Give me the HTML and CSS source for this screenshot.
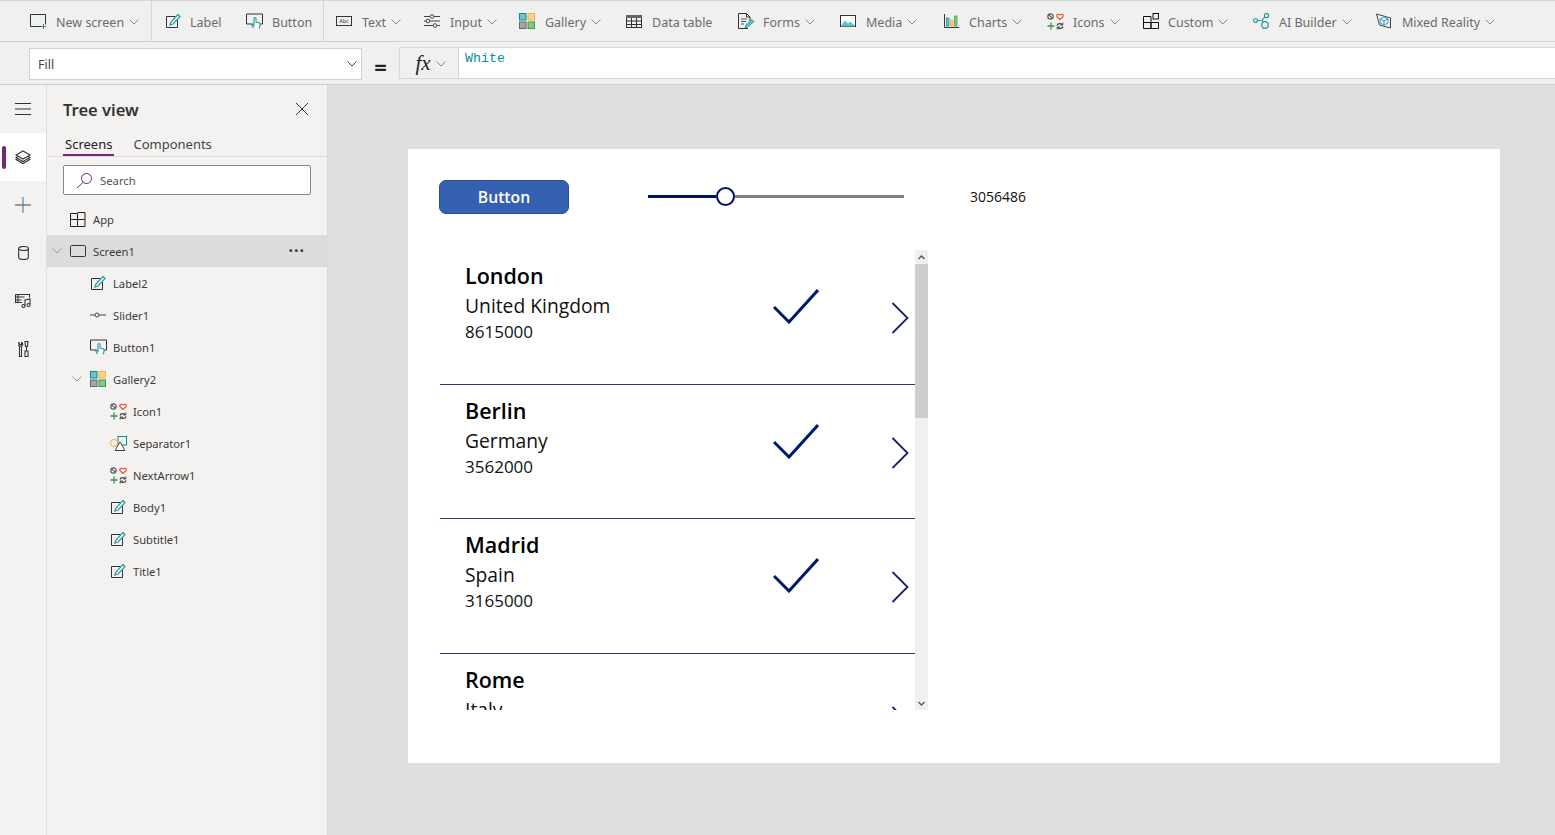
FILE: index.html
```html
<!DOCTYPE html>
<html lang="en">
<head>
  <meta charset="UTF-8">
  <title>Power Apps Studio</title>
  <link rel="stylesheet" href="styles.css">
</head>
<body>
  <svg class="defs" width="0" height="0">
    <symbol id="i-label" viewBox="0 0 16 16">
      <path d="M1.500 3.500h9M1.500 3.500v11h11v-8" fill="none" stroke="#333"/>
      <path d="M5 12l1-3 7-7.500 2 2L8 11z" fill="#fff" stroke="#2a9d9f" stroke-width="1.300"/>
    </symbol>
    <symbol id="i-button" viewBox="0 0 17 16">
      <path d="M6 11H.5V1h16v10h-4" fill="none" stroke="#333"/>
      <path d="M7.500 15l-2-3.500 1-.5 1.500 1.500V5.500a1 1 0 0 1 2 0V9l3 .8c.8.3 1 .8 1 1.500V13l-1 2.500" fill="#fff" stroke="#1f9a9c" stroke-width="1.100"/>
    </symbol>
    <symbol id="i-gallery" viewBox="0 0 16 16">
      <rect x=".5" y=".5" width="6.500" height="6.500" fill="#66c9c9" stroke="#11898c"/>
      <rect x="9" y=".5" width="6.500" height="6.500" fill="#fdd38a" stroke="#f1b04c"/>
      <rect x=".5" y="9" width="6.500" height="6.500" fill="#a6a6a6" stroke="#666"/>
      <rect x="9" y="9" width="6.500" height="6.500" fill="#86c488" stroke="#3f9a45"/>
    </symbol>
    <symbol id="i-icons" viewBox="0 0 17 17">
      <circle cx="3.500" cy="3.500" r="2.700" fill="none" stroke="#555" stroke-width="1.200"/>
      <path d="M1.700 1.700l3.600 3.600" stroke="#555" stroke-width="1.200"/>
      <path d="M13 6.500L10 3.500c-1-1.500 1-3 3-1.500 2-1.500 4 0 3 1.500z" fill="#fff" stroke="#e8593c" stroke-width="1.200"/>
      <path d="M.5 13h7M4 9.500v7" stroke="#36963f" stroke-width="1.300"/>
      <path d="M10 12.500a3 3 0 0 1 5-1M16 13.500a3 3 0 0 1-5 1" fill="none" stroke="#444" stroke-width="1.300"/>
      <path d="M15.800 9.500v2.500h-2.500M10.200 16.500V14h2.500" fill="none" stroke="#444"/>
    </symbol>
    <symbol id="i-app" viewBox="0 0 16 15">
      <path d="M.5 1.500h7v13h-7zM7.500 7.500H.5M7.500 .5h7.500v7H7.500M15 7.500v7H7.500" fill="none" stroke="#222"/>
    </symbol>
    <symbol id="i-check" viewBox="0 0 46 35">
      <path d="M1 18l15 15L45 1" fill="none" stroke="#001a6b" stroke-width="3"/>
    </symbol>
    <symbol id="i-next" viewBox="0 0 18 32">
      <path d="M1.500 1l15 15-15 15" fill="none" stroke="#13226f" stroke-width="1.800"/>
    </symbol>
    <symbol id="i-chev" viewBox="0 0 10 6">
      <path d="M.5.500L5 5 9.500.5" fill="none" stroke="currentColor"/>
    </symbol>
  </svg>

  <header class="toolbar">
    <div class="tool-group group-new">
      <div class="tool">
        <svg class="tool-icon m9" width="17" height="15" viewBox="0 0 17 15"><path d="M12 12.500H.5V.5h15v10" fill="none" stroke="#333"/><path d="M11 12.500h5M13.500 10v5" stroke="#36963f"/></svg>
        <span>New screen</span><svg class="chev"><use href="#i-chev"/></svg>
      </div>
    </div>
    <div class="tool-group group-basic">
      <div class="tool">
        <svg class="tool-icon m9" width="16" height="16"><use href="#i-label"/></svg>
        <span>Label</span>
      </div>
      <div class="tool">
        <svg class="tool-icon m9" width="17" height="16"><use href="#i-button"/></svg>
        <span>Button</span>
      </div>
    </div>
    <div class="tool-group group-rest">
      <div class="tool">
        <svg class="tool-icon" width="16" height="10" viewBox="0 0 16 10"><rect x=".5" y=".5" width="15" height="9" fill="none" stroke="#333"/><text x="8" y="7" class="abc">Abc</text></svg>
        <span>Text</span><svg class="chev"><use href="#i-chev"/></svg>
      </div>
      <div class="tool">
        <svg class="tool-icon" width="16" height="14" viewBox="0 0 16 14"><path d="M0 2.500h6M10 2.500h6M0 7h2M6 7h10M0 11.500h9M13 11.500h3" stroke="#444"/><circle cx="8" cy="2.500" r="1.800" fill="none" stroke="#444"/><circle cx="4" cy="7" r="1.800" fill="none" stroke="#444"/><circle cx="11" cy="11.500" r="1.800" fill="none" stroke="#444"/></svg>
        <span>Input</span><svg class="chev"><use href="#i-chev"/></svg>
      </div>
      <div class="tool">
        <svg class="tool-icon" width="16" height="16"><use href="#i-gallery"/></svg>
        <span>Gallery</span><svg class="chev"><use href="#i-chev"/></svg>
      </div>
      <div class="tool">
        <svg class="tool-icon" width="16" height="13" viewBox="0 0 16 13"><rect x=".5" y=".5" width="15" height="12" fill="none" stroke="#333"/><rect x="0" y="0" width="16" height="3" fill="#666"/><path d="M0 6h16M0 9.500h16M5.500 3v10M10.500 3v10" stroke="#333"/></svg>
        <span>Data table</span>
      </div>
      <div class="tool">
        <svg class="tool-icon m9" width="16" height="16" viewBox="0 0 16 16"><path d="M10 15.500H.5V.5h8l3.500 3.500v4M8.500.5V4H12" fill="none" stroke="#333"/><path d="M3 6h6M3 8.500h5M3 11h3" stroke="#555"/><path d="M7 15l1-3 6-5.500 2 2L9.500 14z" fill="#62c3c3" stroke="#2a9d9f"/></svg>
        <span>Forms</span><svg class="chev"><use href="#i-chev"/></svg>
      </div>
      <div class="tool">
        <svg class="tool-icon" width="16" height="12" viewBox="0 0 16 12"><rect x=".5" y=".5" width="15" height="11" fill="#fff" stroke="#333"/><path d="M1 10.500l4-5 3 3 2-2 5 4v1H1z" fill="#62c3c3"/><circle cx="12.500" cy="3" r=".8" fill="#f1b04c"/></svg>
        <span>Media</span><svg class="chev"><use href="#i-chev"/></svg>
      </div>
      <div class="tool">
        <svg class="tool-icon" width="15" height="14" viewBox="0 0 15 14"><path d="M.5 0v13.500H15" fill="none" stroke="#333"/><rect x="2.500" y="4" width="2.500" height="8" fill="#62c3c3" stroke="#11898c" stroke-width=".7"/><rect x="6.500" y="6" width="2.500" height="6" fill="#fdc56f" stroke="#f1b04c" stroke-width=".7"/><rect x="10.500" y="2" width="2.500" height="10" fill="#86c488" stroke="#3f9a45" stroke-width=".7"/></svg>
        <span>Charts</span><svg class="chev"><use href="#i-chev"/></svg>
      </div>
      <div class="tool">
        <svg class="tool-icon m9" width="17" height="17"><use href="#i-icons"/></svg>
        <span>Icons</span><svg class="chev"><use href="#i-chev"/></svg>
      </div>
      <div class="tool">
        <svg class="tool-icon m9" width="16" height="16" viewBox="0 0 16 16"><path d="M.5 3.500h7.500v12H.5zM8 9.500h7.500v6H8zM.5 9.500H8" fill="none" stroke="#111"/><rect x="10" y=".5" width="5.500" height="5.500" fill="none" stroke="#111"/></svg>
        <span>Custom</span><svg class="chev"><use href="#i-chev"/></svg>
      </div>
      <div class="tool">
        <svg class="tool-icon m9" width="17" height="16" viewBox="0 0 17 16"><g fill="none" stroke="#1f9a9c" stroke-width="1.200"><circle cx="2.500" cy="7.500" r="2"/><circle cx="13.500" cy="2.500" r="2.100"/><circle cx="12" cy="12" r="3.300"/><path d="M4.500 7.500h4M12 4.500c-2 .5-3.500 2.500-2 5"/></g></svg>
        <span>AI Builder</span><svg class="chev"><use href="#i-chev"/></svg>
      </div>
      <div class="tool">
        <svg class="tool-icon m11" width="15" height="16" viewBox="0 0 15 16"><path d="M.5 1l14 4v10L3.500 12z" fill="none" stroke="#444"/><path d="M4 6l4-2 4 2v4l-4 2-4-2zM4 6l4 2 4-2M8 8v4" fill="none" stroke="#2e9fd0"/></svg>
        <span>Mixed Reality</span><svg class="chev"><use href="#i-chev"/></svg>
      </div>
    </div>
  </header>

  <div class="formula-bar">
    <div class="prop-select">
      <span>Fill</span><svg class="chev dark"><use href="#i-chev"/></svg>
    </div>
    <div class="equals">=</div>
    <div class="fx-btn">
      <i>fx</i><svg class="chev"><use href="#i-chev"/></svg>
    </div>
    <div class="formula-input">White</div>
  </div>

  <main class="workspace">
    <nav class="rail">
      <div class="rail-item">
        <svg width="16" height="12" viewBox="0 0 16 12"><path d="M0 .5h16M0 6h16M0 11.500h16" stroke="#333"/></svg>
      </div>
      <div class="rail-item active">
        <svg width="16" height="15" viewBox="0 0 16 15"><g fill="#fff" stroke="#333" stroke-width="1.100"><path d="M1 9.500l7 4 7-4-7-4z"/><path d="M1 7.500l7 4 7-4-7-4z"/><path d="M1 5l7 4 7-4-7-4z"/></g></svg>
      </div>
      <div class="rail-item">
        <svg width="16" height="16" viewBox="0 0 16 16"><path d="M0 8h16" stroke="#444"/><path d="M8 0v16" stroke="#3b6ea5"/></svg>
      </div>
      <div class="rail-item">
        <svg width="11" height="14" viewBox="0 0 11 14"><g fill="none" stroke="#333" stroke-width="1.100"><ellipse cx="5.500" cy="2.500" rx="4.800" ry="2"/><path d="M.7 2.500v9c0 1.200 2 2 4.800 2s4.800-.8 4.800-2v-9"/></g></svg>
      </div>
      <div class="rail-item">
        <svg width="16" height="14" viewBox="0 0 16 14"><g fill="none" stroke="#333" stroke-width="1.100"><path d="M.5.500h14v3M.5.500v8h6.500M.5 3h9M.5 6h6M3 .5v8"/><path d="M10 11.500V6l5-1v5.500"/><circle cx="8.500" cy="12" r="1.500"/><circle cx="13.500" cy="11" r="1.500"/></g></svg>
      </div>
      <div class="rail-item">
        <svg width="11" height="16" viewBox="0 0 11 16"><g fill="none" stroke="#333" stroke-width="1.100"><path d="M1 1.500a1.800 1.800 0 0 0 1 3.500 1.800 1.800 0 0 0 1.500-3.500v2h-2zM1.500 5v10.500h2V5"/><path d="M7 .5h3l-.5 5h-2zM8.500 5.500V10M7 10h3v5.500H7z"/></g></svg>
      </div>
    </nav>

    <aside class="tree-panel">
      <div class="tree-title">
        <h2>Tree view</h2>
        <svg width="14" height="14" viewBox="0 0 14 14"><path d="M1 1l12 12M13 1L1 13" stroke="#333"/></svg>
      </div>
      <div class="tabs">
        <span class="tab selected">Screens</span>
        <span class="tab">Components</span>
      </div>
      <div class="search">
        <svg width="17" height="17" viewBox="0 0 17 17"><circle cx="10.500" cy="6.500" r="5" fill="none" stroke="#742774"/><path d="M7 10.500L1 16" stroke="#742774"/></svg>
        <span>Search</span>
      </div>
      <ul class="tree">
        <li class="row">
          <svg class="row-icon" width="16" height="15"><use href="#i-app"/></svg>App
        </li>
        <li class="row current">
          <svg class="twist"><use href="#i-chev"/></svg>
          <svg class="row-icon" width="16" height="12" viewBox="0 0 16 12"><rect x=".5" y=".5" width="15" height="11" rx="1" fill="none" stroke="#333"/></svg>Screen1
          <span class="more">···</span>
        </li>
        <li class="row lvl1">
          <svg class="row-icon" width="16" height="16"><use href="#i-label"/></svg>Label2
        </li>
        <li class="row lvl1">
          <svg class="row-icon" width="16" height="6" viewBox="0 0 16 6"><path d="M0 3h5M9 3h7" stroke="#444"/><circle cx="7" cy="3" r="2" fill="none" stroke="#444"/></svg>Slider1
        </li>
        <li class="row lvl1">
          <svg class="row-icon wide" width="17" height="16"><use href="#i-button"/></svg>Button1
        </li>
        <li class="row lvl1">
          <svg class="twist"><use href="#i-chev"/></svg>
          <svg class="row-icon" width="16" height="16"><use href="#i-gallery"/></svg>Gallery2
        </li>
        <li class="row lvl2">
          <svg class="row-icon wide" width="17" height="17"><use href="#i-icons"/></svg>Icon1
        </li>
        <li class="row lvl2">
          <svg class="row-icon wide" width="17" height="15" viewBox="0 0 17 15"><rect x="8" y=".5" width="8.500" height="8.500" fill="none" stroke="#11898c"/><circle cx="4" cy="7" r="3.600" fill="none" stroke="#f1b04c"/><path d="M10 6l-5 8.500h10z" fill="#fff" stroke="#444"/></svg>Separator1
        </li>
        <li class="row lvl2">
          <svg class="row-icon wide" width="17" height="17"><use href="#i-icons"/></svg>NextArrow1
        </li>
        <li class="row lvl2">
          <svg class="row-icon" width="16" height="16"><use href="#i-label"/></svg>Body1
        </li>
        <li class="row lvl2">
          <svg class="row-icon" width="16" height="16"><use href="#i-label"/></svg>Subtitle1
        </li>
        <li class="row lvl2">
          <svg class="row-icon" width="16" height="16"><use href="#i-label"/></svg>Title1
        </li>
      </ul>
    </aside>

    <section class="canvas">
      <div class="screen">
        <div class="top-row">
          <button class="app-btn">Button</button>
          <div class="slider">
            <div class="slider-fill"></div>
            <div class="slider-thumb"></div>
            <div class="slider-rest"></div>
          </div>
          <div class="slider-value">3056486</div>
        </div>
        <div class="gallery">
          <div class="gallery-list">
            <div class="card">
              <div class="card-text">
                <div class="city">London</div>
                <div class="country">United Kingdom</div>
                <div class="pop">8615000</div>
              </div>
              <svg class="check"><use href="#i-check"/></svg>
              <svg class="next"><use href="#i-next"/></svg>
            </div>
            <div class="card">
              <div class="card-text">
                <div class="city">Berlin</div>
                <div class="country">Germany</div>
                <div class="pop">3562000</div>
              </div>
              <svg class="check"><use href="#i-check"/></svg>
              <svg class="next"><use href="#i-next"/></svg>
            </div>
            <div class="card">
              <div class="card-text">
                <div class="city">Madrid</div>
                <div class="country">Spain</div>
                <div class="pop">3165000</div>
              </div>
              <svg class="check"><use href="#i-check"/></svg>
              <svg class="next"><use href="#i-next"/></svg>
            </div>
            <div class="card">
              <div class="card-text">
                <div class="city">Rome</div>
                <div class="country">Italy</div>
              </div>
              <svg class="next"><use href="#i-next"/></svg>
            </div>
          </div>
          <div class="scrollbar">
            <div class="scroll-arrow">
              <svg width="7" height="5" viewBox="0 0 7 5"><path d="M.5 4L3.500 1l3 3" fill="none" stroke="#555" stroke-width="1.300"/></svg>
            </div>
            <div class="scroll-thumb"></div>
            <div class="scroll-track"></div>
            <div class="scroll-arrow">
              <svg width="7" height="5" viewBox="0 0 7 5"><path d="M.5 1l3 3 3-3" fill="none" stroke="#555" stroke-width="1.300"/></svg>
            </div>
          </div>
        </div>
      </div>
    </section>
  </main>
</body>
</html>
```

FILE: styles.css
```css
* {
  box-sizing: border-box;
}
html, body {
  margin: 0;
  height: 100%;
  overflow: hidden;
}
body {
  display: flex;
  flex-direction: column;
  font-family: "Noto Sans", "Open Sans", sans-serif;
  font-size: 12.500px;
  color: #333;
  background: #f0f0f0;
}
.defs {
  position: absolute;
}

/* top ribbon */
.toolbar {
  display: flex;
  height: 42px;
  flex: none;
  background: #f0f0f0;
  border-top: 1px solid #d6d6d6;
  border-bottom: 1px solid #d0d0d0;
}
.tool-group {
  display: grid;
  align-items: center;
  height: 40px;
  border-right: 1px solid #d6d6d6;
}
.group-new {
  width: 152px;
  padding-left: 30px;
  grid-template-columns: 1fr;
}
.group-basic {
  width: 172px;
  padding-left: 13px;
  grid-template-columns: 81px 1fr;
}
.group-rest {
  padding-left: 12px;
  border-right: 0;
  grid-template-columns: 88px 95px 107px 112px 102px 104px 103px 96px 110px 123px 130px;
}
.tool {
  display: flex;
  align-items: center;
  color: #6b6b6b;
  white-space: nowrap;
}
.tool span {
  padding-top: 2px;
}
.tool-icon {
  flex: none;
  margin-right: 10px;
}
.tool-icon.m9 {
  margin-right: 9px;
}
.tool-icon.m11 {
  margin-right: 11px;
}
.abc {
  font-size: 5.500px;
  text-anchor: middle;
  fill: #333;
}
.chev {
  flex: none;
  width: 10px;
  height: 6px;
  margin-left: 5px;
  margin-top: 2px;
  color: #8a8a8a;
}
.chev.dark {
  margin-top: 0;
  color: #444;
}

/* formula row */
.formula-bar {
  display: flex;
  align-items: flex-start;
  height: 43px;
  flex: none;
  padding: 5px 0 0 29px;
  background: #f0f0f0;
  border-bottom: 1px solid #d0d0d0;
}
.prop-select {
  display: flex;
  align-items: center;
  justify-content: space-between;
  width: 333px;
  height: 32px;
  margin-top: 1px;
  padding: 0 4px 0 8px;
  background: #fff;
  border: 1px solid #cfcfcf;
  color: #444;
}
.equals {
  width: 37px;
  padding-top: 5px;
  text-align: center;
  font-size: 22px;
  font-weight: 700;
  line-height: 28px;
  color: #222;
}
.fx-btn {
  display: flex;
  align-items: center;
  justify-content: center;
  width: 60px;
  height: 32px;
  padding-left: 3px;
  background: #f0f0f0;
  border: 1px solid #d6d6d6;
}
.fx-btn i {
  font-family: "Liberation Serif", serif;
  font-size: 21px;
  color: #222;
}
.formula-input {
  flex: 1;
  height: 32px;
  padding: 3px 6px;
  background: #fff;
  border-top: 1px solid #d6d6d6;
  border-bottom: 1px solid #d6d6d6;
  font-family: "Liberation Mono", monospace;
  font-size: 13.330px;
  color: #0c8ba3;
}

/* body */
.workspace {
  display: flex;
  flex: 1;
  min-height: 0;
}
.rail {
  width: 47px;
  flex: none;
  background: #f3f2f1;
  border-right: 1px solid #e1dfdd;
}
.rail-item {
  display: flex;
  align-items: center;
  justify-content: center;
  height: 48px;
}
.rail-item.active {
  position: relative;
  background: #fff;
}
.rail-item.active::before {
  content: "";
  position: absolute;
  left: 2px;
  top: 13px;
  width: 4px;
  height: 23px;
  border-radius: 2px;
  background: #742774;
}

.tree-panel {
  width: 280px;
  flex: none;
  background: #f3f2f1;
}
.tree-title {
  display: flex;
  align-items: center;
  justify-content: space-between;
  height: 50px;
  padding: 0 18px 2px 16px;
}
.tree-title h2 {
  margin: 0;
  font-size: 16.500px;
  font-weight: 600;
  color: #323130;
}
.tabs {
  display: flex;
  height: 22px;
  padding-left: 16px;
  gap: 17px;
  border-bottom: 1px solid #dcdcdc;
}
.tab {
  height: 21px;
  padding: 0 2px;
  line-height: 18px;
  font-size: 13px;
  color: #444;
}
.tab.selected {
  border-bottom: 2px solid #742774;
  color: #222;
}
.search {
  display: flex;
  align-items: center;
  height: 30px;
  margin: 8px 16px 8px;
  padding-left: 12px;
  gap: 7px;
  background: #fff;
  border: 1px solid #8a8886;
  border-radius: 2px;
  font-size: 11.300px;
  color: #555;
}
.tree {
  margin: 0;
  padding: 0;
  list-style: none;
}
.row {
  position: relative;
  display: flex;
  align-items: center;
  height: 32px;
  padding-left: 23px;
  font-size: 11.200px;
  color: #3b3a39;
}
.row.lvl1 {
  padding-left: 43px;
}
.row.lvl2 {
  padding-left: 63px;
}
.row.current {
  background: #dcdcdc;
}
.row-icon {
  flex: none;
  margin-right: 7px;
}
.row-icon.wide {
  margin-right: 6px;
}
.twist {
  position: absolute;
  left: 5px;
  width: 10px;
  height: 6px;
  color: #999;
}
.row.lvl1 .twist {
  left: 25px;
}
.more {
  position: absolute;
  right: 22px;
  margin-bottom: 3px;
  font-size: 16px;
  font-weight: 700;
  letter-spacing: 1px;
  line-height: 16px;
}

/* the app on the canvas */
.canvas {
  flex: 1;
  padding: 64px 55px 0 80px;
  background: #dfdfdf;
  border-left: 1px solid #dadada;
}
.screen {
  width: 1092px;
  height: 614px;
  padding: 31px 0 0 31px;
  background: #fff;
}
.top-row {
  display: flex;
  align-items: center;
  height: 33px;
}
.app-btn {
  width: 130px;
  height: 34px;
  background: #3660b1;
  border: 1px solid #2a4f97;
  border-radius: 7px;
  color: #fff;
  font-family: "Open Sans", sans-serif;
  font-size: 15.700px;
  font-weight: 600;
}
.slider {
  display: flex;
  align-items: center;
  width: 256px;
  margin-left: 79px;
}
.slider-fill {
  width: 68px;
  height: 3px;
  background: #00126b;
}
.slider-thumb {
  width: 19px;
  height: 19px;
  flex: none;
  background: #fff;
  border: 2.500px solid #00126b;
  border-radius: 50%;
}
.slider-rest {
  flex: 1;
  height: 3px;
  background: #808080;
}
.slider-value {
  margin-left: 66px;
  font-family: "Open Sans", sans-serif;
  font-size: 14px;
  color: #111;
}
.gallery {
  display: flex;
  width: 488px;
  height: 460px;
  margin: 37px 0 0 1px;
  overflow: hidden;
}
.gallery-list {
  width: 475px;
  flex: none;
}
.card {
  display: flex;
  height: 134.500px;
  padding-left: 25px;
  border-bottom: 1px solid #2b3a86;
  font-family: "Open Sans", sans-serif;
  color: #111;
}
.card-text {
  width: 308px;
  flex: none;
  padding-top: 11px;
}
.city {
  font-size: 21.500px;
  font-weight: 600;
  line-height: 30px;
  color: #000;
}
.country {
  font-size: 19.300px;
  line-height: 29px;
}
.pop {
  font-size: 17px;
  line-height: 23px;
}
.check {
  width: 46px;
  height: 35px;
  flex: none;
  margin-top: 39px;
}
.next {
  width: 18px;
  height: 32px;
  flex: none;
  margin: 52px 0 0 72px;
}
.card:last-child .next {
  margin-left: 118px;
}
.scrollbar {
  display: flex;
  flex-direction: column;
  width: 13px;
  flex: none;
  background: #f0f0f0;
}
.scroll-arrow {
  display: flex;
  align-items: center;
  justify-content: center;
  height: 14px;
  flex: none;
}
.scroll-thumb {
  height: 154px;
  background: #cdcdcd;
}
.scroll-track {
  flex: 1;
}
```
